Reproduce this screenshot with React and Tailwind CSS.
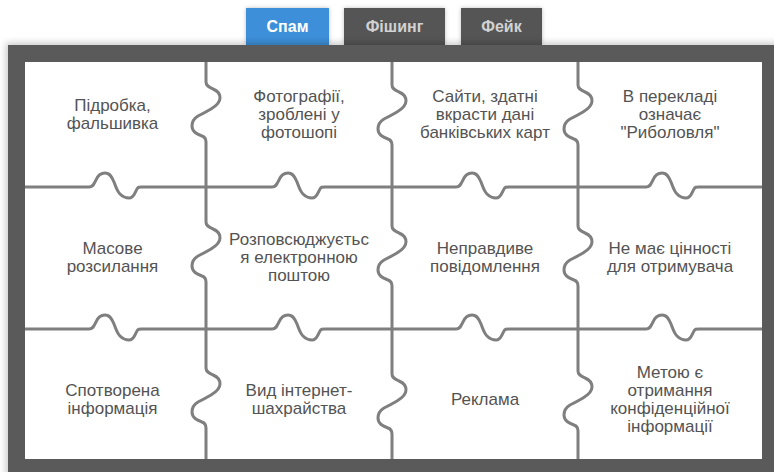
import React from "react";

const W = 737;
const H = 397;
const COLS = [181, 367, 553];
const ROWS = [125, 267];

// knob start offsets along each vertical seam (one per row) and each horizontal seam (one per column)
const V_KNOBS = [
  [20, 160, 306],
  [23, 164, 312],
  [23, 164, 309],
];
const H_KNOBS = [64, 247, 431, 621];

function vKnob(x, y) {
  return (
    `L${x},${y} ` +
    `C${x},${y + 4} ${x + 3},${y + 5} ${x + 7},${y + 7} ` +
    `C${x + 12},${y + 9} ${x + 14},${y + 12} ${x + 14},${y + 16} ` +
    `C${x + 14},${y + 21} ${x + 10},${y + 24} ${x + 5},${y + 27} ` +
    `C${x},${y + 30} ${x - 4},${y + 32} ${x - 8},${y + 34} ` +
    `C${x - 13},${y + 37} ${x - 14},${y + 40} ${x - 14},${y + 44} ` +
    `C${x - 14},${y + 50} ${x - 9},${y + 52} ${x - 4},${y + 54} ` +
    `C${x - 1},${y + 55} ${x},${y + 57} ${x},${y + 60} `
  );
}

function hKnob(x, y) {
  return (
    `L${x},${y} ` +
    `C${x + 4},${y} ${x + 5},${y - 3} ${x + 7},${y - 7} ` +
    `C${x + 9},${y - 12} ${x + 12},${y - 14} ${x + 16},${y - 14} ` +
    `C${x + 21},${y - 14} ${x + 23},${y - 10} ${x + 25},${y - 5} ` +
    `C${x + 27},${y} ${x + 28},${y + 4} ${x + 31},${y + 7} ` +
    `C${x + 34},${y + 10} ${x + 37},${y + 11} ${x + 40},${y + 11} ` +
    `C${x + 45},${y + 11} ${x + 46},${y + 5} ${x + 48},${y + 2} ` +
    `C${x + 49},${y} ${x + 50},${y} ${x + 53},${y} `
  );
}

function seams() {
  const paths = [];
  COLS.forEach((x, i) => {
    let d = `M${x},0 `;
    V_KNOBS[i].forEach((y) => (d += vKnob(x, y)));
    d += `L${x},${H}`;
    paths.push(d);
  });
  ROWS.forEach((y) => {
    let d = `M0,${y} `;
    H_KNOBS.forEach((x) => (d += hKnob(x, y)));
    d += `L${W},${y}`;
    paths.push(d);
  });
  return paths;
}

const PIECES = [
  ["Підробка,", "фальшивка"],
  ["Фотографії,", "зроблені у", "фотошопі"],
  ["Сайти, здатні", "вкрасти дані", "банківських карт"],
  ["В перекладі", "означає", "\"Риболовля\""],
  ["Масове", "розсилання"],
  ["Розповсюджуєтьс", "я електронною", "поштою"],
  ["Неправдиве", "повідомлення"],
  ["Не має цінності", "для отримувача"],
  ["Спотворена", "інформація"],
  ["Вид інтернет-", "шахрайства"],
  ["Реклама"],
  ["Метою є", "отримання", "конфіденційної", "інформації"],
];

const ROW_PAD = ["pb-[19px]", "pb-[0px]", "pt-[12px]"];

function Piece({ lines, index }) {
  const row = Math.floor(index / 4);
  const col = index % 4;
  return (
    <div
      className={`flex items-center justify-center text-center ${ROW_PAD[row]} ${
        col === 0 ? "pr-[6px]" : ""
      }`}
    >
      <p className="text-[17px] leading-[18px] text-[#535353] whitespace-nowrap">
        {lines.map((l, i) => (
          <span key={i} className="block">
            {l}
          </span>
        ))}
      </p>
    </div>
  );
}

function Tab({ label, active, width }) {
  return (
    <div
      className={`flex items-center justify-center h-[37px] ${width} text-[16px] font-bold shadow-[0_0_4px_rgba(0,0,0,0.25)] ${
        active ? "bg-[#3c8fd8] text-white" : "bg-[#555555] text-[#d2d2d2]"
      }`}
    >
      {label}
    </div>
  );
}

export default function App() {
  return (
    <div className="relative w-[774px] h-[472px] overflow-hidden bg-white font-['Liberation_Sans',Arial,sans-serif]">
      <div className="flex h-[45px] pt-[8px] pl-[246px]">
        <Tab label="Спам" active width="w-[83px]" />
        <div className="w-[15px]" />
        <Tab label="Фішинг" width="w-[101px]" />
        <div className="w-[16px]" />
        <Tab label="Фейк" width="w-[81px]" />
      </div>
      <div className="relative ml-[8px] w-[779px] bg-[#5a5a5a] pl-[17px] pt-[17px] pb-[17px] shadow-[0_0_7px_2px_rgba(0,0,0,0.22)]">
        <div className="relative w-[737px] h-[397px] bg-white">
          <div className="grid grid-cols-[181px_186px_186px_184px] grid-rows-[125px_142px_130px] h-full">
            {PIECES.map((lines, i) => (
              <Piece key={i} lines={lines} index={i} />
            ))}
          </div>
          <svg
            className="absolute inset-0 pointer-events-none"
            width={W}
            height={H}
            viewBox={`0 0 ${W} ${H}`}
          >
            {seams().map((d, i) => (
              <path
                key={i}
                d={d}
                fill="none"
                stroke="#7f7f7f"
                strokeWidth="3"
                strokeLinejoin="round"
              />
            ))}
          </svg>
        </div>
      </div>
    </div>
  );
}
